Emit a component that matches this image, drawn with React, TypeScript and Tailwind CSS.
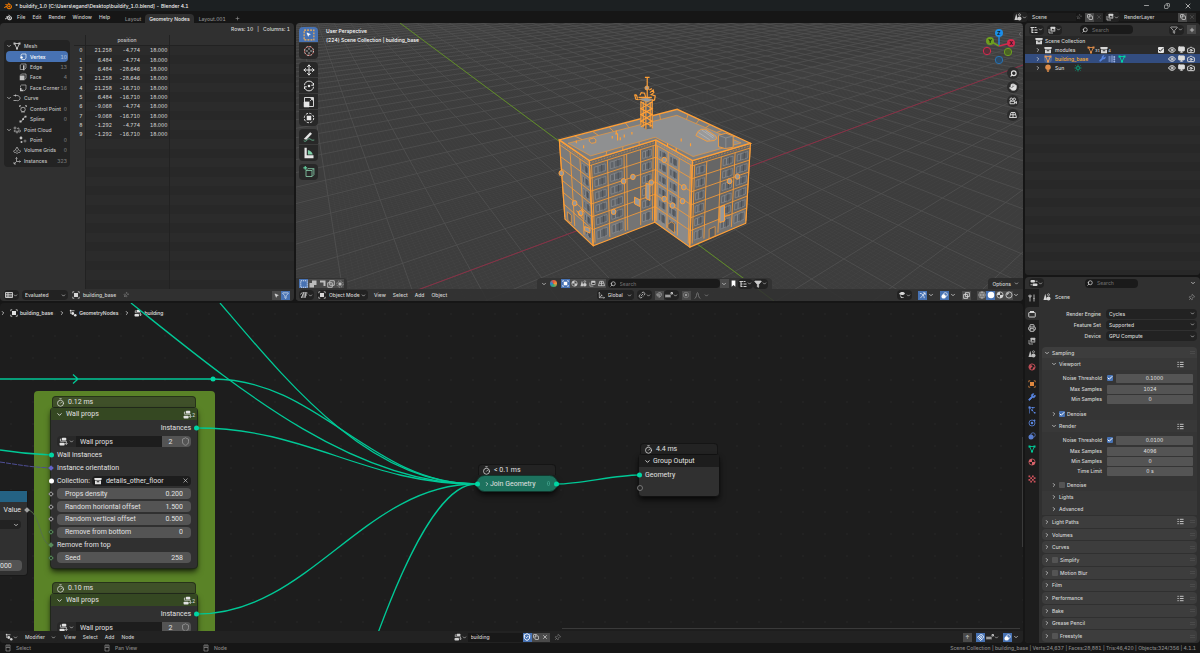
import type { ReactNode } from "react";
import {
  Camera, Check, ChevronDown, ChevronRight, ChevronLeft, Copy, Eye, Filter, Hand, Link2, Magnet, Minus,
  Monitor, MousePointer2, Move, Pin, Plus, Printer, Search, Shield, ShieldCheck, Timer, Wrench, X,
} from "lucide-react";
import { SiBlender } from "react-icons/si";

type P = [number, number];

/* ---------- icons ---------- */

const paths: Record<string, ReactNode> = {
  object: (
    <>
      <rect x="4" y="4" width="8" height="8" fill="currentColor" />
      <path d="M1.500 4.500v-3h3M11.500 1.500h3v3M14.500 11.500v3h-3M4.500 14.500h-3v-3" fill="none" stroke="currentColor" strokeWidth="1.400" />
    </>
  ),
  tree: (
    <>
      <rect x="5" y="1.500" width="8" height="4.500" rx="1.500" fill="currentColor" />
      <rect x="1" y="10" width="9" height="5" rx="1.500" fill="currentColor" />
      <path d="M4 3.500H2.500v4H13v5M11 11l2 2.500 2-2.500" fill="none" stroke="currentColor" strokeWidth="1.300" />
    </>
  ),
  nodes: (
    <>
      <circle cx="3.500" cy="3.500" r="2" fill="currentColor" />
      <circle cx="7.500" cy="9" r="2.800" fill="currentColor" />
      <circle cx="12.500" cy="12.500" r="2.500" fill="currentColor" />
      <path d="M6 3.500h5M3.500 6v4" stroke="currentColor" strokeWidth="1.500" />
    </>
  ),
  geonodes: (
    <g fill="currentColor">
      <path d="M1 3h4v2H1zM1 7h4v2H1zM1 11h4v2H1zM7 1h2v14H7z" />
      <circle cx="12.500" cy="4" r="2" /><circle cx="12.500" cy="8.500" r="2" /><circle cx="12.500" cy="13" r="2" />
    </g>
  ),
  collection: (
    <>
      <rect x="1" y="2" width="14" height="4" rx="0.500" fill="currentColor" />
      <path fillRule="evenodd" d="M2 7h12v7.500H2zM5.500 8.500v2h5v-2z" fill="currentColor" />
    </>
  ),
  mesh: (
    <>
      <path d="M3 3h10l-5 10.500z" fill="none" stroke="currentColor" strokeWidth="1.800" />
      <path d="M1 1h4v4H1zM11 1h4v4h-4zM6 11h4v4H6z" fill="currentColor" />
    </>
  ),
  vertex: (
    <>
      <path d="M4 7V3.500L6 2h8v8l-2 3H5" fill="none" stroke="currentColor" strokeWidth="1.300" />
      <circle cx="5" cy="9" r="2.500" fill="currentColor" />
    </>
  ),
  edge: (
    <>
      <path d="M8 13H2.500V4L5 2h9v8l-3 3" fill="none" stroke="currentColor" strokeWidth="1.300" />
      <path d="M9.500 4.500v10" stroke="currentColor" strokeWidth="3" />
    </>
  ),
  face: (
    <>
      <path d="M3 4l2-2h9v8l-2 3" fill="none" stroke="currentColor" strokeWidth="1.300" />
      <rect x="1.500" y="5" width="9.500" height="9.500" fill="currentColor" />
    </>
  ),
  corner: (
    <>
      <path d="M3 7V3.500L5 2h9v8l-2.500 3H10" fill="none" stroke="currentColor" strokeWidth="1.300" />
      <path d="M2 8h3v3.500h4v3H2z" fill="currentColor" />
    </>
  ),
  curve: <path d="M1 3h5M3.500 3C10 2 15 5 14 9.500 13 13 9 14 7 13M1 13h6M5 1v4" fill="none" stroke="currentColor" strokeWidth="1.500" />,
  control: (
    <>
      <circle cx="8" cy="9" r="4.500" fill="none" stroke="currentColor" strokeWidth="1.500" />
      <path d="M1 2l3 3M15 2l-3 3M1 4V1h3M12 1h3v3M4 14h8" fill="none" stroke="currentColor" strokeWidth="1.300" />
    </>
  ),
  spline: (
    <>
      <path d="M3 13c4 0 3-4 5-5s2-5 6-5" fill="none" stroke="currentColor" strokeWidth="1.500" />
      <path d="M1 11h4v4H1zM6.500 6.500h3.500V10H6.500zM11 1.500h4v3.500h-4z" fill="currentColor" />
    </>
  ),
  points: (
    <g fill="none" stroke="currentColor" strokeWidth="1.300">
      <circle cx="4" cy="4" r="2" /><circle cx="10.500" cy="5" r="1.300" /><circle cx="3.500" cy="10" r="1.300" />
      <circle cx="8" cy="12" r="2" /><circle cx="13" cy="10" r="2" />
    </g>
  ),
  point: (
    <>
      <circle cx="4" cy="4" r="2.800" fill="currentColor" />
      <circle cx="5" cy="12" r="2" fill="currentColor" /><circle cx="12" cy="10" r="2" fill="none" stroke="currentColor" />
    </>
  ),
  volume: <path d="M4 9l4-7 4 7M3 8c-3 3-1 6 2 5 2 2 5 2 6 0 4 1 5-3 2-5M6 10h4" fill="none" stroke="currentColor" strokeWidth="1.400" />,
  axes: <path d="M7 1v8h8M7 9l-5 5M5 3l2-2 2 2M13 7l2 2-2 2M2 10v4h4" fill="none" stroke="currentColor" strokeWidth="1.400" />,
  orientation: <path d="M3 1v12h12M3 13l6-6M1 3l2-2 2 2M13 11l2 2-2 2M6 7h3v3" fill="none" stroke="currentColor" strokeWidth="1.400" />,
  increment: <path d="M1 10h9M2 7v6M6 7v6M10 7v6M12 3h3v3h-3z" fill="none" stroke="currentColor" strokeWidth="1.800" />,
  sheet: <path d="M1 3h14v10H1zM1 6.500h14M1 10h14M6 3v10" fill="none" stroke="currentColor" strokeWidth="1.800" />,
  viewport: <path d="M5 4h10M4 8h10M2 12h10M8 2L3 14M12 2l-2 11M1 7l3-4" fill="none" stroke="currentColor" strokeWidth="1.600" />,
  outline: <path d="M1 3h7M4 3v10h3M4 8h3M9 8h6M9 13h6M9 3h4" fill="none" stroke="currentColor" strokeWidth="2.200" />,
  props: (
    <>
      <rect x="1" y="2" width="9" height="5" rx="2" fill="currentColor" /><rect x="5" y="9" width="10" height="5" rx="2" fill="currentColor" />
      <path d="M11 4.500h4M1 11.500h3" stroke="currentColor" strokeWidth="1.500" />
    </>
  ),
  scene: (
    <>
      <path d="M4.500 1.500L8 14H1z" fill="currentColor" />
      <circle cx="11" cy="11" r="4" fill="currentColor" /><circle cx="11" cy="3.500" r="2" fill="none" stroke="currentColor" strokeWidth="1.400" />
    </>
  ),
  particles: (
    <>
      <path d="M3 1v14M3 3l10 11M3 3h11" stroke="currentColor" strokeWidth="1.200" fill="none" />
      <path d="M1 1h4v4H1zM8 2h3v3H8zM12 12h3v3h-3zM7 7h3v3H7z" fill="currentColor" />
    </>
  ),
  physics: (
    <>
      <circle cx="8" cy="8" r="6" fill="none" stroke="currentColor" strokeWidth="1.600" />
      <circle cx="8" cy="8" r="2.500" fill="currentColor" /><circle cx="13" cy="3" r="1.800" fill="currentColor" />
    </>
  ),
  target: (
    <>
      <circle cx="8" cy="8" r="5.500" fill="none" stroke="currentColor" strokeWidth="1" /><circle cx="8" cy="8" r="2.500" fill="currentColor" />
    </>
  ),
  sphere: (
    <>
      <circle cx="8" cy="8" r="6.200" fill="none" stroke="currentColor" strokeWidth="1.500" />
      <path d="M8 1.800A6.200 6.200 0 0 0 2 8h6zM8 8v6.200A6.200 6.200 0 0 0 14.200 8z" fill="currentColor" />
    </>
  ),
  shiny: (
    <>
      <circle cx="8" cy="8" r="6.200" fill="none" stroke="currentColor" strokeWidth="1.600" />
      <path d="M4 8a4 4 0 0 1 4-4" fill="none" stroke="currentColor" strokeWidth="2" />
    </>
  ),
  wire: <path d="M8 1.500a6.500 6.500 0 1 0 0 13 6.500 6.500 0 0 0 0-13zM1.500 8h13M8 1.500v13M8 1.500c-4 3-4 10 0 13M8 1.500c4 3 4 10 0 13" fill="none" stroke="currentColor" strokeWidth="1" />,
  world: (
    <>
      <circle cx="8" cy="8" r="6.200" fill="none" stroke="currentColor" strokeWidth="1.800" />
      <path d="M3 4l5 1 1 3-3 1-1 4-3-4zM10 9l4-1-2 5-3 1z" fill="currentColor" />
    </>
  ),
  solid: <circle cx="8" cy="8" r="6.500" fill="currentColor" />,
  render: (
    <>
      <rect x="1.500" y="5" width="13" height="9" rx="1" fill="none" stroke="currentColor" strokeWidth="1.800" />
      <path d="M4 2h8v3H4z" fill="currentColor" />
    </>
  ),
  checker: <path d="M1 1h3.500v3.500H1zM8 1h3.500v3.500H8zM4.500 4.500H8V8H4.500zM11.500 4.500H15V8h-3.500zM1 8h3.500v3.500H1zM8 8h3.500v3.500H8zM4.500 11.500H8V15H4.500zM11.500 11.500H15V15h-3.500z" fill="currentColor" />,
  list: <path d="M1 3h3M6.500 3H15M1 8h3M6.500 8H15M1 13h3M6.500 13H15" stroke="currentColor" strokeWidth="2" />,
  bulb: (
    <>
      <circle cx="8" cy="6.500" r="5.500" fill="currentColor" /><path d="M5.500 13h5M6 15h4" stroke="currentColor" strokeWidth="1.500" />
    </>
  ),
  sun: (
    <>
      <circle cx="8" cy="8" r="3" fill="none" stroke="currentColor" strokeWidth="1.500" />
      <path d="M8 1v3M8 12v3M1 8h3M12 8h3M3 3l2 2M11 11l2 2M13 3l-2 2M5 11l-2 2" stroke="currentColor" strokeWidth="1.400" />
    </>
  ),
  layers: (
    <>
      <path d="M2 6v8h8" fill="none" stroke="currentColor" strokeWidth="1.500" />
      <rect x="5" y="1.500" width="9.500" height="9.500" rx="1" fill="currentColor" />
      <path d="M6.500 9l2.500-4 1.500 2 1.500-1.500 1.500 3.500z" fill="#2b2b2b" />
    </>
  ),
  overlay: (
    <>
      <circle cx="6" cy="10" r="5" fill="currentColor" /><circle cx="10" cy="6" r="4.500" fill="none" stroke="currentColor" strokeWidth="1.500" />
    </>
  ),
  gizmo: <path d="M2 3c5 0 10 5 10 11M3 14L14 2M9 2h5v5" fill="none" stroke="currentColor" strokeWidth="1.600" />,
  tool: <path d="M4 1v6M2 2v4h4V2M4 7v8M12 1v7M12 9v6M10.500 9h3" fill="none" stroke="currentColor" strokeWidth="1.800" />,
  visibility: (
    <>
      <path d="M2 6c3-5 9-5 12-1-3 4-8 4-12 1z" fill="currentColor" />
      <path d="M5 9l2 5 2-2 2 2" fill="none" stroke="currentColor" strokeWidth="1.800" />
    </>
  ),
  cursor: (
    <>
      <circle cx="8" cy="8" r="6" fill="none" stroke="#e6e6e6" strokeWidth="1.300" strokeDasharray="2.400 2.300" />
      <circle cx="8" cy="8" r="6" fill="none" stroke="#d9574f" strokeWidth="1.300" strokeDasharray="2.300 2.400" strokeDashoffset="2.300" />
      <path d="M8 3.500v3M8 9.500v3M3.500 8h3M9.500 8h3" stroke="currentColor" />
    </>
  ),
  rotate: (
    <>
      <path d="M2 7a6 5.500 0 0 1 12 0M14 9a6 5.500 0 0 1-12 0M14 4v3h-3M2 12V9h3" fill="none" stroke="currentColor" strokeWidth="1.300" />
      <circle cx="8" cy="8" r="1.700" fill="currentColor" />
    </>
  ),
  scale: (
    <>
      <path d="M2 2h12v12H2z" fill="none" stroke="currentColor" strokeWidth="1.200" />
      <path d="M1.500 8H8v6.500H1.500zM9 7l4-4M10 3h3v3" fill="currentColor" stroke="currentColor" />
    </>
  ),
  transform: (
    <>
      <circle cx="8" cy="8" r="6.300" fill="none" stroke="currentColor" strokeWidth="1.300" strokeDasharray="3 1.900" />
      <rect x="5" y="5" width="6" height="6" fill="currentColor" />
    </>
  ),
  annotate: (
    <>
      <path d="M1 10.500L9.500 1.500l2.500 2L4.500 11.500z" fill="currentColor" />
      <path d="M1 13c4 3 5-5 9-2 2 1.500 3 1.500 5 1" fill="none" stroke="#65b08c" strokeWidth="1.300" />
    </>
  ),
  measure: (
    <>
      <path d="M2 1h3v10h9v4H2z" fill="currentColor" /><path d="M6.500 4c4 1 5.500 3 6.500 6H6.500z" fill="#7fd0a8" />
    </>
  ),
  cube: (
    <>
      <path d="M4 6h8v8H4zM4 6l2.500-2.500h8L12 6M14.500 3.500v8L12 14" fill="none" stroke="#7fbf9f" strokeWidth="1.200" />
      <path d="M3 0v5M.5 2.500h5" stroke="#65d0a0" strokeWidth="1.500" />
    </>
  ),
  mouse: <path d="M4 2h8v12H4zM4 7h8M8 2v5" fill="none" stroke="currentColor" strokeWidth="1.500" />,
  persp: <path d="M4 3h8l3 10H1zM3 7.500h10M8 3v10" fill="none" stroke="currentColor" strokeWidth="1.800" />,
  movie: (
    <>
      <circle cx="4.500" cy="4.500" r="2.500" fill="none" stroke="currentColor" strokeWidth="1.800" /><circle cx="10.500" cy="4.500" r="2.500" fill="none" stroke="currentColor" strokeWidth="1.800" />
      <path d="M2 8.500h9v5H2zM12 11l3-2v4z" fill="none" stroke="currentColor" strokeWidth="1.800" />
    </>
  ),
  union: (
    <>
      <rect x="1" y="6" width="9" height="9" fill="currentColor" /><rect x="6" y="1" width="9" height="9" fill="currentColor" />
    </>
  ),
  subtract: <path d="M4 1h11v11h-4V5H4z" fill="currentColor" />,
  differ: <path d="M1.500 5.500h9v9h-9zM5.500 1.500h9v9h-9z" fill="none" stroke="currentColor" strokeWidth="2" />,
  select: <rect x="1.500" y="1.500" width="13" height="13" fill="none" stroke="currentColor" strokeWidth="1.500" strokeDasharray="2.500 1.500" />,
};

const Icon = ({ name, className = "size-2" }: { name: string; className?: string }) => (
  <svg viewBox="0 0 16 16" aria-hidden="true" className={`shrink-0 ${className}`}>
    {paths[name]}
  </svg>
);

const Down = ({ className = "size-[6px]" }: { className?: string }) => <ChevronDown strokeWidth={3} className={`shrink-0 ${className}`} />;
const Right = () => <ChevronRight strokeWidth={3} className="size-[6px] shrink-0" />;

/* ---------- shared controls ---------- */

const Menu = ({ items }: { items: string[] }) => (
  <nav className="flex items-center">
    {items.map((item) => (
      <button key={item} className="px-[3px] pr-1">{item}</button>
    ))}
  </nav>
);

const IconSelect = ({ children, label }: { children: ReactNode; label: string }) => (
  <button aria-label={label} className="flex h-[10px] shrink-0 items-center rounded-sm bg-[#222222] px-px">
    {children}
    <Down className="size-[5px]" />
  </button>
);

interface IconButtonProps {
  label: string;
  children: ReactNode;
  tone?: "on" | "off" | "dim";
}

const tones = {
  on: "bg-[#4772b3] text-white",
  off: "bg-[#4a4a4a]",
  dim: "bg-[#2a2a2a] text-[#666666]",
};

const IconButton = ({ label, children, tone = "off" }: IconButtonProps) => (
  <button aria-label={label} className={`flex size-[9px] shrink-0 items-center justify-center ${tones[tone]}`}>{children}</button>
);

const Select = ({ label, value, id, className = "" }: { label: string; value: string; id: string; className?: string }) => (
  <div className={`relative flex h-[10px] items-center rounded-sm bg-[#222222] ${className}`}>
    <select id={id} aria-label={label} className="w-full appearance-none bg-transparent pl-[3px] outline-none">
      <option>{value}</option>
    </select>
    <ChevronDown strokeWidth={3} className="pointer-events-none absolute right-[2px] size-[5px]" />
  </div>
);

const SearchBox = ({ className = "" }: { className?: string }) => (
  <label className={`flex h-[9px] items-center gap-1 rounded-sm bg-[#1a1a1a] px-[2px] ${className}`}>
    <Search strokeWidth={3} className="size-[6px] shrink-0 -scale-x-100" />
    <input type="search" aria-label="Search" placeholder="Search" className="w-full min-w-0 bg-transparent outline-none placeholder:text-[#6a6a6a]" />
  </label>
);

const CheckBox = ({ checked, id, label }: { checked?: boolean; id: string; label?: string }) => (
  <span className="relative flex size-[6px] shrink-0">
    <input id={id} aria-label={label} type="checkbox" defaultChecked={checked} className="peer size-[6px] appearance-none rounded-[1px] bg-[#545454] checked:bg-[#4772b3]" />
    <Check className="pointer-events-none absolute inset-0 hidden size-[6px] text-white peer-checked:block" strokeWidth={4} />
  </span>
);

/* ---------- top bars ---------- */

const TitleBar = () => (
  <header className="flex h-[11px] shrink-0 items-center bg-[#1c2022] px-1 text-[#f0f0f0]">
    <SiBlender className="mr-[3px] size-[8px] text-[#ea7600]" />
    <h1>* buildify_1.0 [C:\Users\egand\Desktop\buildify_1.0.blend] - Blender 4.1</h1>
    <div className="ml-auto flex items-center gap-[14px] pr-1">
      <button aria-label="Minimize"><Minus className="size-[7px]" /></button>
      <button aria-label="Restore"><Copy className="size-[6px] -scale-x-100" /></button>
      <button aria-label="Close"><X className="size-[8px]" /></button>
    </div>
  </header>
);

const MenuBar = () => (
  <div className="flex h-[12px] shrink-0 items-center pl-[5px] pr-1 text-[#d0d0d0]">
    <SiBlender className="size-[7px]" />
    <div className="flex items-center gap-[5px] pl-1">
      {["File", "Edit", "Render", "Window", "Help"].map((m) => (
        <button key={m} className="px-px">{m}</button>
      ))}
    </div>
    <div role="tablist" className="ml-[10px] flex h-[9px] items-end self-end text-[#8e8e8e]">
      <button role="tab" className="h-[9px] px-1">Layout</button>
      <button role="tab" aria-selected="true" className="h-[9px] rounded-t-sm bg-[#303030] px-1 text-[#ececec]">Geometry Nodes</button>
      <button role="tab" className="h-[9px] px-[5px]">Layout.001</button>
      <button aria-label="Add workspace" className="flex h-[9px] items-center px-1"><Plus className="size-[5px]" strokeWidth={3} /></button>
    </div>
    <div className="ml-auto flex items-center gap-[2px]">
      <div className="flex h-[9px] items-center">
        <IconSelect label="Browse scene"><Icon name="scene" /></IconSelect>
        <input aria-label="Scene name" defaultValue="Scene" className="w-[48px] bg-[#1d1d1d] pl-[4px] outline-none" />
        <Pin className="mr-[3px] size-[6px] rotate-45 text-[#777777]" />
        <IconButton label="New scene"><Copy className="size-[6px]" strokeWidth={3} /></IconButton>
        <IconButton label="Delete scene" tone="dim"><X className="size-[6px]" /></IconButton>
      </div>
      <div className="flex h-[9px] items-center">
        <IconSelect label="Browse view layer"><Icon name="layers" /></IconSelect>
        <input aria-label="View layer name" defaultValue="RenderLayer" className="w-[58px] bg-[#1d1d1d] pl-[4px] outline-none" />
        <IconButton label="New view layer"><Copy className="size-[6px]" strokeWidth={3} /></IconButton>
        <IconButton label="Delete view layer" tone="dim"><X className="size-[6px]" /></IconButton>
      </div>
    </div>
  </div>
);

/* ---------- spreadsheet ---------- */

const tree = [
  { icon: "mesh", name: "Mesh", group: true },
  { icon: "vertex", name: "Vertex", count: 10, child: true, active: true },
  { icon: "edge", name: "Edge", count: 13, child: true },
  { icon: "face", name: "Face", count: 4, child: true },
  { icon: "corner", name: "Face Corner", count: 16, child: true },
  { icon: "curve", name: "Curve", group: true },
  { icon: "control", name: "Control Point", count: 0, child: true },
  { icon: "spline", name: "Spline", count: 0, child: true },
  { icon: "points", name: "Point Cloud", group: true },
  { icon: "point", name: "Point", count: 0, child: true },
  { icon: "volume", name: "Volume Grids", count: 0 },
  { icon: "axes", name: "Instances", count: 323 },
];

const positions = [
  ["21.258", "-4.774", "18.000"],
  ["6.484", "-4.774", "18.000"],
  ["6.484", "-28.646", "18.000"],
  ["21.258", "-28.646", "18.000"],
  ["21.258", "-16.710", "18.000"],
  ["6.484", "-16.710", "18.000"],
  ["-9.068", "-4.774", "18.000"],
  ["-9.068", "-16.710", "18.000"],
  ["-1.292", "-4.774", "18.000"],
  ["-1.292", "-16.710", "18.000"],
];

const Spreadsheet = () => (
  <section className="flex w-[294px] shrink-0 flex-col overflow-hidden rounded bg-[#303030]">
    <div className="flex h-[12px] shrink-0 items-center justify-end gap-[4px] pr-1">
      <span>Rows: 10</span><span>|</span><span>Columns: 1</span>
    </div>
    <div className="flex min-h-0 flex-1">
      <div className="w-[74px] shrink-0 pl-1 pt-[5px]">
        <ul className="flex h-[127px] w-[66px] flex-col rounded-sm bg-[#232323] px-[2px] py-px text-[#c4c4c4]">
          {tree.map((t) => (
            <li key={t.name} className={`flex min-h-0 flex-1 items-center rounded-sm pr-px ${t.active ? "bg-[#4772b3] text-white" : ""}`}>
              <span className="w-[7px] shrink-0">{t.group && <Down />}</span>
              <span className={`flex shrink-0 ${t.child ? "w-[17px] justify-end pr-[3px]" : "w-[11px]"}`}>
                <Icon name={t.icon} />
              </span>
              <span className="min-w-0 flex-1 whitespace-nowrap">{t.name}</span>
              <span className="opacity-50">{t.count}</span>
            </li>
          ))}
        </ul>
      </div>
      <table className="h-full flex-1 table-fixed border-collapse text-right text-[#c8c8c8]">
        <colgroup>
          <col className="w-[11px]" />
          <col className="w-[28px]" />
          <col className="w-[28px]" />
          <col className="w-[28px]" />
          <col />
        </colgroup>
        <thead>
          <tr className="h-[10px] border-b border-[#222222]">
            <th className="p-0" />
            <th colSpan={3} className="border-x border-[#222222] p-0 text-center font-medium">position</th>
            <th className="p-0" />
          </tr>
        </thead>
        <tbody>
          {Array.from({ length: 26 }, (_, i) => (
            <tr key={i} className="leading-[8px] odd:bg-[#2b2b2b] even:bg-[#282828]">
              <td className="border-r border-[#222222] bg-[#303030] p-0 pr-[2px]">{i < 10 ? i : "\u00a0"}</td>
              <td className="p-0 pr-px">{positions[i]?.[0]}</td>
              <td className="p-0 pr-px">{positions[i]?.[1]}</td>
              <td className="border-r border-[#222222] p-0 pr-px">{positions[i]?.[2]}</td>
              <td className="p-0" />
            </tr>
          ))}
        </tbody>
      </table>
    </div>
    <div className="flex h-[12px] shrink-0 items-center gap-[3px] px-1">
      <IconSelect label="Editor type"><Icon name="sheet" /></IconSelect>
      <Select id="eval" label="Object evaluation state" value="Evaluated" className="w-[46px]" />
      <span className="flex items-center gap-[3px] pl-px"><Icon name="object" />building_base</span>
      <Pin className="ml-[4px] size-[6px] rotate-45 text-[#999999]" />
      <div className="ml-auto flex">
        <IconButton label="Selected only"><MousePointer2 className="size-[5px] fill-current" /></IconButton>
        <IconButton label="Use filter" tone="on"><Filter className="size-[7px]" /></IconButton>
      </div>
    </div>
  </section>
);

/* ---------- 3D viewport ---------- */

const mix = (a: P, b: P, t: number): P => [a[0] + (b[0] - a[0]) * t, a[1] + (b[1] - a[1]) * t];
const pts = (list: P[]) => list.map((p) => p.map((n) => n.toFixed(1)).join(",")).join(" ");

// corners go top-left, top-right, bottom-right, bottom-left
const at = (q: P[], u: number, v: number) => mix(mix(q[0], q[1], u), mix(q[3], q[2], u), v);

const floors = [0.06, 0.21, 0.36, 0.51, 0.66, 0.81];

interface WallProps {
  quad: P[];
  cols: number[];
  fill: string;
  base: string;
  windows: number[];
}

const Wall = ({ quad, cols, fill, base, windows }: WallProps) => (
  <g>
    <polygon points={pts(quad)} fill={fill} />
    <polygon points={pts([at(quad, 0, 0.81), at(quad, 1, 0.81), quad[2], quad[3]])} fill={base} />
    {windows.map((c) =>
      floors.map((f, r) => {
        const w = cols[c + 1] - cols[c];
        const l = cols[c] + w * 0.16;
        const r2 = cols[c + 1] - w * 0.14;
        const third = (r2 - l) / 3;
        const top = f + 0.035;
        const bot = f + (r === 5 ? 0.13 : 0.115);
        return (
          <g key={`${c}-${r}`}>
            <polygon points={pts([at(quad, l, top), at(quad, r2, top), at(quad, r2, bot), at(quad, l, bot)])} fill="#5f6368" stroke="#8b8e92" strokeWidth="2" />
            <polyline points={pts([at(quad, l + third, top), at(quad, l + third, bot)])} stroke="#85888c" strokeWidth="3" />
            <polyline points={pts([at(quad, r2 - third, top), at(quad, r2 - third, bot)])} stroke="#4c5056" strokeWidth="3" />
          </g>
        );
      }),
    )}
    <g stroke="#f39a38" strokeWidth="2.600" fill="none">
      {floors.map((f) => <polyline key={f} points={pts([at(quad, 0, f), at(quad, 1, f)])} />)}
      {cols.map((c) => <polyline key={c} points={pts([at(quad, c, 0.06), at(quad, c, 0.97)])} />)}
      <polyline points={pts([at(quad, 0, 0.03), at(quad, 1, 0.03)])} strokeWidth="1.500" strokeDasharray="5 4" />
    </g>
    <polygon points={pts(quad)} fill="none" stroke="#ff9f36" strokeWidth="3.500" strokeLinejoin="round" />
  </g>
);

const roof: P[] = [[58, 240], [412, 148], [632, 250], [458, 302], [348, 240], [148, 302]];
const roofInner: P[] = [[84, 250], [411, 166], [604, 249], [460, 290], [346, 232], [152, 288]];

const Building = () => (
  <g transform="translate(540 60) scale(0.333)">
    <Wall quad={[[58, 240], [148, 302], [160, 558], [75, 478]]} cols={[0, 0.35, 0.68, 1]} fill="#7b7b7b" base="#7e7e7e" windows={[2]} />
    <Wall quad={[[148, 302], [348, 240], [345, 487], [160, 558]]} cols={[0, 0.03, 0.27, 0.52, 0.56, 0.77, 0.96, 1]} fill="#6b6b6b" base="#747474" windows={[1, 2, 5]} />
    <Wall quad={[[348, 240], [458, 302], [450, 562], [345, 487]]} cols={[0, 0.05, 0.34, 0.64, 0.95, 1]} fill="#878787" base="#8a8a8a" windows={[1, 2]} />
    <Wall quad={[[458, 302], [632, 250], [618, 490], [450, 562]]} cols={[0, 0.04, 0.25, 0.5, 0.74, 1]} fill="#666666" base="#727272" windows={[1, 3, 4]} />
    <polygon points={pts(roof)} fill="#7c7e80" stroke="#ff9f36" strokeWidth="4" />
    <polygon points={pts(roofInner)} fill="#8f9091" stroke="#f39a38" strokeWidth="2" />
    <g stroke="#f39a38" strokeWidth="2.500">
      {[0.13, 0.28, 0.42, 0.56, 0.7, 0.85].map((t) => (
        <polyline key={t} points={pts([mix(roof[0], roof[1], t), mix(roofInner[0], roofInner[1], t)])} />
      ))}
      {[0.15, 0.3, 0.45, 0.62, 0.8].map((t) => (
        <polyline key={t} points={pts([mix(roof[1], roof[2], t), mix(roofInner[1], roofInner[2], t)])} />
      ))}
      {[0.25, 0.5, 0.75].map((t) => (
        <polyline key={t} points={pts([mix(roof[5], roof[4], t), mix(roofInner[5], roofInner[4], t)])} />
      ))}
    </g>
    {/* roof details */}
    <g fill="none" stroke="#ff9f36" strokeWidth="2.500" strokeLinejoin="round">
      <path d="M468 227l6-12 10-7h14l30 20 3 8-8 6-22 2z" fill="#999999" />
      <path d="M476 218l34 22M486 210l34 24M497 212l26 18" stroke="#bdbdbd" strokeWidth="2" />
      <path d="M536 226l22-6 22 8v34l-24 4-20-6z" fill="#6f7276" />
      <path d="M558 234v32M536 226l22 8 22-6" stroke="#9a9a9a" strokeWidth="2" />
      <path d="M148 238l14-4 6 6-1 8-12 2-7-6z" fill="#858585" />
      <path d="M109 242v8M131 256v9M217 228v8M229 212v8M226 222h7v20M241 232v9M253 224v9M276 216v8M383 250v10M409 264v10M424 236v9M452 250v9" strokeWidth="3.500" />
    </g>
    {/* lattice tower */}
    <path d="M302 124h36v82l-20 2-16-12z" fill="#5e646b" />
    <g fill="none" stroke="#ff9f36" strokeWidth="3.500">
      <path d="M303 124v72M310 126v76M318 124v84M331 126v76M337 122v84" />
      <path d="M303 126l34 20-34 18 34 20-34 16M337 126l-34 20 34 18-34 20 34 14" />
      <path d="M284 104l4 14 8 1M284 104l6 2 3 10M296 112h40M300 106l4-8 10 2 4 14M322 50v72M315 52h14M330 98l10-8 2 8-8 6 12 4-2 12-8 2M328 90l8-4" />
    </g>
    <circle cx="321" cy="84" r="6" fill="#b0a090" stroke="#ff9f36" strokeWidth="2.500" />
    <path d="M296 118l24-5 20 6-18 7z" fill="#8f99a3" stroke="#ff9f36" strokeWidth="1.500" />
    {/* air conditioners and balconies */}
    <g fill="#94989c" stroke="#ff9f36" strokeWidth="3">
      {[[64, 340], [104, 430], [251, 364], [279, 351], [334, 368], [221, 456], [373, 300], [398, 437], [432, 382], [373, 417], [428, 424], [569, 364], [593, 350], [122, 460]].map(([x, y]) => (
        <ellipse key={`${x}-${y}`} cx={x} cy={y} rx="7" ry="8" />
      ))}
      <path d="M318 370l12 4v48l-12-6zM284 412l16 8v20l-16-8zM540 442l14-6v48l-14 4zM134 500l16 6v14l-16-8z" />
      <path d="M110 452l18 24M122 446l12 12M556 466h14" />
    </g>
    <g fill="#5a5d61" stroke="#ff9f36" strokeWidth="2">
      <path d="M384 494l10-8 10 6v28l-20-16zM508 508l18-8v28l-18 8zM82 456l12 10v24l-10-8z" />
    </g>
  </g>
);

const range = (from: number, to: number) => Array.from({ length: to - from + 1 }, (_, i) => from + i);

const Grid = () => (
  <g fill="none">
    <g stroke="#ffffff" strokeOpacity="0.018" strokeWidth="1">
      {range(-60, 50).map((k) => <path key={`a${k}`} d={`M288 -60L${774 + k * 7.16} 301`} />)}
      {range(-60, 90).map((k) => <path key={`b${k}`} d={`M1359 -60L${388 + k * 9.7} 301`} />)}
    </g>
    <g stroke="#505050" strokeOpacity="0.8" strokeWidth="1">
      {range(-7, 38).map((k) => <path key={`a${k}`} d={`M288 -60L${774 + k * 71.6} 301`} />)}
      {range(-38, 9).map((k) => <path key={`b${k}`} d={`M1359 -60L${388 + k * 97} 301`} />)}
    </g>
    <path d="M400 23L774 301" stroke="#5f8c26" />
    <path d="M388 301L1023 65" stroke="#8a2f45" />
  </g>
);

const toolGroups = [["select", "cursor"], ["move", "rotate", "scale", "transform"], ["annotate", "measure"], ["cube"]];

const Toolbar = () => (
  <div className="flex flex-col gap-[3px]">
    {toolGroups.map((group) => (
      <div key={group[0]} className="flex flex-col divide-y divide-[#3a3a3a] overflow-hidden rounded-sm">
        {group.map((tool) => (
          <button key={tool} aria-label={tool} className={`relative flex h-[16px] w-[19px] items-center justify-center text-[#e6e6e6] ${tool === "select" ? "bg-[#4772b3]" : "bg-[#282828]"}`}>
            {tool === "select" && <Icon name="select" className="size-[12px] text-[#ffb24d]" />}
            {tool === "select" && <MousePointer2 className="absolute size-[5px] fill-white text-white" />}
            {tool === "move" && <Move className="size-[12px]" />}
            {tool !== "select" && tool !== "move" && <Icon name={tool} className="size-[12px]" />}
          </button>
        ))}
      </div>
    ))}
  </div>
);

const Gizmo = () => (
  <svg viewBox="982 27 38 38" className="size-[38px]" aria-label="Orientation gizmo">
    <path d="M1000 46V33" stroke="#2083d8" strokeWidth="1.500" />
    <path d="M1000 46L991 41" stroke="#6e9f1f" strokeWidth="1.500" />
    <path d="M1000 46L1012 43" stroke="#d4294e" strokeWidth="1.500" />
    <circle cx="988" cy="51" r="3.700" fill="#5a2f3a" stroke="#d4294e" />
    <circle cx="1009" cy="52" r="3.700" fill="#4a6325" stroke="#6e9f1f" />
    <circle cx="1000" cy="60" r="3.700" fill="#2b4a66" stroke="#2a72b0" />
    <circle cx="1000" cy="33" r="4" fill="#1c8fe8" />
    <circle cx="991" cy="41" r="4" fill="#6e9f1f" />
    <circle cx="1012" cy="43" r="4" fill="#d4294e" />
    <g fontSize="5" fontWeight="700" textAnchor="middle" fill="#111111">
      <text x="1000" y="35">Z</text>
      <text x="991" y="43">Y</text>
      <text x="1012" y="45">X</text>
    </g>
  </svg>
);

const NavButton = ({ label, children }: { label: string; children: ReactNode }) => (
  <button aria-label={label} className="flex size-[12px] items-center justify-center rounded-full bg-[#2b2b2b] text-[#e0e0e0]">{children}</button>
);

const Viewport = () => (
  <section className="relative flex min-w-0 flex-1 flex-col justify-between overflow-hidden rounded bg-[#3d3d3d]">
    <svg viewBox="296 23 727 278" preserveAspectRatio="xMidYMid slice" className="absolute inset-0 size-full">
      <Grid />
      <Building />
    </svg>
    <ChevronLeft className="absolute right-0 top-[8px] size-[6px] text-[#999999]" />
    <div className="relative flex items-start gap-2 pl-[3px] pt-[4px]">
      <Toolbar />
      <div className="leading-[9px] text-white">
        <p>User Perspective</p>
        <p>(224) Scene Collection | building_base</p>
      </div>
      <div className="ml-auto flex flex-col items-end gap-[2px] pr-[4px]">
        <Gizmo />
        <NavButton label="Zoom"><Search className="size-[7px] -scale-x-100" strokeWidth={4} /></NavButton>
        <NavButton label="Pan"><Hand className="size-[8px] fill-current" /></NavButton>
        <NavButton label="Camera view"><Icon name="movie" /></NavButton>
        <NavButton label="Perspective"><Icon name="persp" /></NavButton>
      </div>
    </div>
    <div className="relative">
      <div className="flex items-end">
        <div className="flex h-[11px] flex-1 items-center">
          <div className="flex h-full items-center rounded-tr bg-[#333333] px-[3px] text-[#bdbdbd]">
            {["select", "union", "subtract", "differ", "transform"].map((m, i) => (
              <IconButton key={m} label={`Select mode ${m}`} tone={i ? "off" : "on"}><Icon name={m} /></IconButton>
            ))}
          </div>
        </div>
        <div className="mr-[11px] flex h-[11px] items-center rounded-t bg-[#333333] px-1 text-[#cccccc]">
          <Down />
          <span className="mx-[3px] size-[7px] rounded-full bg-[conic-gradient(#e2553f,#e8973a,#3aa76d,#2d83c9,#e2553f)]" />
          <div className="ml-px flex">
            {["object", "sphere", "scene", "layers", "persp"].map((m, i) => (
              <IconButton key={m} label={`Filter ${m}`} tone={i ? "off" : "on"}><Icon name={m} className="size-[7px]" /></IconButton>
            ))}
          </div>
          <SearchBox className="ml-[2px] w-[112px]" />
          <IconButton label="Hide"><Down /></IconButton>
          <svg viewBox="0 0 8 10" className="mx-[2px] h-[7px] w-[5px]"><path d="M1 0h6v10L4 7.500 1 10z" fill="white" /></svg>
          <IconSelect label="Display mode"><Icon name="outline" /></IconSelect>
          <IconSelect label="Filter"><Filter className="size-[8px] fill-current" /></IconSelect>
        </div>
        <div className="flex h-[11px] flex-1 items-center justify-end">
          <button className="flex h-full items-center gap-[3px] rounded-tl bg-[#2b2b2b] px-1">Options<Down className="size-[5px]" /></button>
        </div>
      </div>
      <div className="flex h-[12px] items-center justify-between bg-[#303030]/85 px-[3px]">
        <div className="flex flex-1 items-center gap-[3px]">
          <IconSelect label="Editor type"><Icon name="viewport" /></IconSelect>
          <div className="flex h-[10px] items-center rounded-sm bg-[#222222] pl-px">
            <Icon name="object" />
            <Select id="mode" label="Mode" value="Object Mode" className="w-[42px]" />
          </div>
          <Menu items={["View", "Select", "Add", "Object"]} />
        </div>
        <div className="mr-[13px] flex items-center gap-[3px]">
          <div className="flex h-[10px] items-center rounded-sm bg-[#222222] pl-px">
            <Icon name="orientation" className="size-[7px]" />
            <Select id="orientation" label="Transform orientation" value="Global" className="w-[29px]" />
          </div>
          <IconSelect label="Pivot"><Link2 className="size-[8px] -rotate-45" /></IconSelect>
          <div className="flex items-center">
            <IconButton label="Snap"><Magnet className="size-[6px]" /></IconButton>
            <IconSelect label="Snap to"><Icon name="increment" /></IconSelect>
          </div>
          <div className="flex items-center gap-[3px] text-[#999999]">
            <IconButton label="Proportional editing"><Icon name="target" /></IconButton>
            <svg viewBox="0 0 12 12" className="size-[7px]"><path d="M1 11C5 11 4 1 6 1s1 10 5 10" fill="none" stroke="currentColor" /></svg>
            <Down className="size-[5px]" />
          </div>
        </div>
        <div className="flex flex-1 items-center justify-end gap-[6px] pr-px">
          <IconSelect label="Visibility"><Icon name="visibility" /></IconSelect>
          <div className="flex items-center gap-px">
            <IconButton label="Gizmos" tone="on"><Icon name="gizmo" className="size-[7px]" /></IconButton>
            <Down />
          </div>
          <div className="flex items-center gap-px">
            <IconButton label="Overlays" tone="on"><Icon name="overlay" className="size-[7px]" /></IconButton>
            <Down />
          </div>
          <IconButton label="X-ray"><Icon name="differ" className="size-[7px]" /></IconButton>
          <div className="flex items-center">
            {["wire", "solid", "sphere", "shiny"].map((m) => (
              <IconButton key={m} label={`Shading ${m}`} tone={m === "solid" ? "on" : "off"}><Icon name={m} /></IconButton>
            ))}
            <Down />
          </div>
        </div>
      </div>
    </div>
  </section>
);

/* ---------- node editor ---------- */

const sockets: Record<string, string> = {
  geometry: "size-[5px] rounded-full bg-[#00d6a3]",
  vector: "size-[4px] rotate-45 bg-[#6363c7]",
  collection: "size-[5px] rounded-full bg-white",
  float: "size-[4px] rotate-45 bg-[#a1a1a1]",
  int: "size-[4px] rotate-45 bg-[#598c5c]",
  floatField: "size-[4px] rotate-45 border border-[#a1a1a1] bg-[#1d1d1d]",
  intField: "size-[4px] rotate-45 border border-[#598c5c] bg-[#1d2a1d]",
  empty: "size-[6px] rounded-full border border-[#777777] bg-[#262626]",
};

const Socket = ({ type, side = "left" }: { type: string; side?: "left" | "right" }) => (
  <span className={`absolute top-1/2 -translate-y-1/2 ${side === "left" ? "-left-[2px]" : "-right-[2px]"} ${sockets[type]}`} />
);

const Perf = ({ time, className = "" }: { time: string; className?: string }) => (
  <div className={`mx-[2px] flex h-[11px] items-center gap-[3px] rounded-t-sm border border-b-0 px-[3px] ${className}`}>
    <Timer className="size-[9px]" />
    {time}
  </div>
);

const inputs = [
  { label: "Props density", value: "0.200", socket: "floatField" },
  { label: "Random horiontal offset", value: "1.500", socket: "floatField" },
  { label: "Random vertical offset", value: "0.500", socket: "floatField" },
  { label: "Remove from bottom", value: "0", socket: "intField" },
  { label: "Remove from top", socket: "int" },
  { label: "Seed", value: "258", socket: "intField" },
];

const WallPropsInputs = () => (
  <div className="mb-[4px] mt-[2px] flex h-[115px] flex-col">
    <div className="relative flex flex-1 items-center pl-[6px]">Wall instances<Socket type="geometry" /></div>
    <div className="relative flex flex-1 items-center pl-[6px]">Instance orientation<Socket type="vector" /></div>
    <div className="relative flex flex-1 items-center px-[6px]">
      <label htmlFor="collection">Collection:</label>
      <span className="ml-[2px] flex h-[10px] min-w-0 flex-1 items-center gap-[4px] rounded-sm bg-[#1d1d1d] px-[2px]">
        <Icon name="collection" className="size-[8px]" />
        <input id="collection" defaultValue="details_other_floor" className="min-w-0 flex-1 bg-transparent outline-none" />
        <X className="size-[7px] shrink-0" />
      </span>
      <Socket type="collection" />
    </div>
    {inputs.map((f) => (
      <div key={f.label} className="relative flex flex-1 items-center px-[6px]">
        {f.value ? (
          <label className="flex h-[11px] flex-1 items-center rounded-sm bg-[#545454] px-2">
            <span className="flex-1 whitespace-nowrap">{f.label}</span>
            <input defaultValue={f.value} className="w-6 bg-transparent text-right outline-none" />
          </label>
        ) : (
          f.label
        )}
        <Socket type={f.socket} />
      </div>
    ))}
  </div>
);

const WallPropsNode = ({ time, className, children }: { time: string; className: string; children?: ReactNode }) => (
  <article className={`absolute w-[148px] ${className}`}>
    <Perf time={time} className="border-[#27331a] bg-[#3f5029]" />
    <div className="rounded-sm border border-[#20281a] bg-[#303030] shadow-md shadow-black/60">
      <div className="flex h-[12px] items-center gap-[3px] bg-[#354822] pl-[5px] pr-[2px]">
        <Down className="size-[7px]" />
        <h2>Wall props</h2>
        <span className="ml-auto flex items-center">
          <Icon name="tree" className="size-[9px]" />
          <span className="self-end text-[5px]">2</span>
        </span>
      </div>
      <div className="relative flex h-[16px] items-center justify-end pr-[6px]">
        Instances
        <Socket type="geometry" side="right" />
      </div>
      <div className="mx-[6px] flex h-[11px] items-stretch">
        <button aria-label="Browse node groups" className="flex w-[19px] items-center justify-center gap-px rounded-l-sm bg-[#282828]"><Icon name="tree" className="size-[9px]" /><Down className="size-[5px]" /></button>
        <input aria-label="Node group" defaultValue="Wall props" className="min-w-0 flex-1 bg-[#1d1d1d] pl-[4px] outline-none" />
        <button className="w-[17px] bg-[#545454]">2</button>
        <button aria-label="Fake user" className="flex w-[12px] items-center justify-center rounded-r-sm bg-[#545454] text-[#a0a0a0]"><Shield className="size-[9px]" /></button>
      </div>
      {children}
    </div>
  </article>
);

const links = [
  "M213 379C318 379 371 484 476 484",
  "M131 303C230 382 350 484 476 484",
  "M220 303C290 385 370 484 476 484",
  "M197 428C309 428 364 484 476 484",
  "M197 614C309 614 364 484 476 484",
  "M378 633C405 560 440 484 476 484",
  "M557 484C580 484 615 475 639 475",
  "M0 450Q25 454 51 455",
  "M0 379H213M73 374.500l5 4.500-5 4.500",
];

const Crumb = ({ icon, name }: { icon: string; name: string }) => (
  <li className="flex items-center gap-[4px]">
    <Right />
    <span className="flex items-center gap-[2px]"><Icon name={icon} />{name}</span>
  </li>
);

const NodeEditor = () => (
  <section className="flex min-h-0 flex-[340] flex-col overflow-hidden rounded bg-[#1d1d1d]">
    <div className="relative min-h-0 flex-1 overflow-hidden bg-[radial-gradient(#222222_1px,transparent_1px)] bg-[size:22px_22px] font-[Roboto,sans-serif] text-[7px] font-normal text-[#e2e2e2]">
      <ol className="flex gap-[6px] pt-[6px] font-[Inter,sans-serif] text-[5px] font-medium leading-[7px]">
        <Crumb icon="object" name="building_base" />
        <Crumb icon="nodes" name="GeometryNodes" />
        <Crumb icon="tree" name="building" />
      </ol>
      <div className="absolute left-[34px] top-[88px] h-[400px] w-[181px] rounded-sm bg-[#5a8327]" />
      <svg viewBox="0 303 1022 340" className="absolute left-0 top-0 h-[340px] w-[1022px]" fill="none">
        <g stroke="#00c896" strokeWidth="1.300">
          {links.map((d) => <path key={d} d={d} />)}
        </g>
        <path d="M0 462C20 465 30 467 51 468" stroke="#4f4f96" strokeDasharray="5 1" />
        <path d="M28 510C40 512 40 545 51 545" stroke="#56704c" />
        <circle cx="213" cy="379" r="2.500" fill="#00d6a3" />
      </svg>

      <article className="absolute left-0 top-[187px] w-[28px] rounded-r-sm border border-l-0 border-black/50 bg-[#303030]">
        <div className="h-[11px] bg-[#246283]" />
        <div className="relative flex h-[15px] items-center justify-end pr-[6px]">Value<Socket type="float" side="right" /></div>
        <div className="mr-[6px] mt-[3px] flex h-[9px] items-center justify-end rounded-r-sm bg-[#222222] pr-[2px]"><Down /></div>
        <input aria-label="Value" defaultValue="000" className="mb-[4px] mt-[31px] block h-[11px] w-[22px] rounded-r-sm bg-[#545454] outline-none" />
      </article>

      <WallPropsNode time="0.12 ms" className="left-[50px] top-[93px]"><WallPropsInputs /></WallPropsNode>
      <WallPropsNode time="0.10 ms" className="left-[50px] top-[279px]" />

      <article className="absolute left-[476px] top-[161px] w-[82px]">
        <Perf time="< 0.1 ms" className="border-[#151515] bg-[#232323]" />
        <div className="relative flex h-[17px] items-center rounded-full border border-[#12382e] bg-[#1d725e] px-[7px] shadow-md shadow-black/60">
          <Right />
          <h2>Join Geometry</h2>
          <span className="ml-auto h-[5px] w-[3px] rounded-sm border border-[#3c9c86]" />
          <Socket type="geometry" /><Socket type="geometry" side="right" />
        </div>
      </article>

      <article className="absolute left-[638px] top-[140px] w-[82px]">
        <Perf time="4.4 ms" className="border-[#151515] bg-[#232323]" />
        <div className="rounded-sm border border-[#111111] bg-[#303030] pb-[3px] shadow-md shadow-black/60">
          <div className="flex h-[12px] items-center gap-[2px] bg-[#1d1d1d] pl-[5px]">
            <Down className="size-[7px]" /><h2>Group Output</h2>
          </div>
          <div className="relative flex h-[16px] items-center pl-[6px]">Geometry<Socket type="geometry" /></div>
          <div className="relative h-[10px]"><Socket type="empty" /></div>
        </div>
      </article>
      <span className="absolute bottom-[84px] right-0 h-[110px] w-px bg-[#3a3a3a]" />
      <span className="absolute bottom-[2px] right-[3px] h-px w-[458px] bg-[#3a3a3a]" />
    </div>
    <div className="flex h-[12px] shrink-0 items-center bg-[#222222] px-[4px] text-[#d0d0d0]">
      <div className="flex flex-1 items-center gap-[3px]">
        <IconSelect label="Editor type"><Icon name="nodes" /></IconSelect>
        <Select id="type" label="Node tree type" value="Modifier" className="w-[36px]" />
        <Menu items={["View", "Select", "Add", "Node"]} />
      </div>
      <div className="mr-[10px] flex h-[9px] items-center">
        <IconSelect label="Browse node trees"><Icon name="tree" /></IconSelect>
        <input aria-label="Node tree" defaultValue="building" className="h-[9px] w-[55px] bg-[#181818] pl-[3px] outline-none" />
        <IconButton label="Fake user" tone="on"><ShieldCheck className="size-[8px]" strokeWidth={3} /></IconButton>
        <IconButton label="Duplicate"><Copy className="size-[6px]" strokeWidth={3} /></IconButton>
        <IconButton label="Unlink"><X className="size-[6px]" strokeWidth={3} /></IconButton>
        <Pin className="ml-[4px] size-[7px] rotate-45 text-[#888888]" />
      </div>
      <div className="flex flex-1 items-center justify-end gap-[3px]">
        <IconButton label="Parent tree">↑</IconButton>
        <div className="ml-px flex items-center">
          <IconButton label="Snap" tone="on"><Magnet className="size-[7px]" strokeWidth={3} /></IconButton>
          <IconSelect label="Snap to"><Icon name="increment" /></IconSelect>
        </div>
        <div className="flex items-center gap-px">
          <IconButton label="Overlays" tone="on"><Icon name="overlay" className="size-[7px]" /></IconButton>
          <Down />
        </div>
      </div>
    </div>
  </section>
);

/* ---------- outliner ---------- */

const Toggles = () => (
  <span className="ml-auto flex items-center gap-[2px] pr-[5px] text-[#dcdcdc]">
    <Eye className="size-[8px]" strokeWidth={3} />
    <Monitor className="size-[7px] fill-current" strokeWidth={3} />
    <Camera className="size-[8px]" strokeWidth={3} />
  </span>
);

const CheckBoxLight = () => (
  <span className="relative mr-[4px] flex size-[6px]">
    <input type="checkbox" defaultChecked aria-label="Exclude modules from view layer" className="size-[6px] appearance-none rounded-[1px] bg-[#e6e6e6]" />
    <Check className="pointer-events-none absolute inset-0 size-[6px] text-[#222222]" strokeWidth={4} />
  </span>
);

const outlinerRow = "flex h-[9px] shrink-0 items-center";

const Outliner = () => (
  <section className="flex min-h-0 flex-[252] flex-col overflow-hidden rounded bg-[#282828]">
    <div className="flex h-[13px] shrink-0 items-center bg-[#303030] px-[4px]">
      <div className="flex gap-[3px]">
        <IconSelect label="Editor type"><Icon name="outline" /></IconSelect>
        <IconSelect label="Display mode"><Icon name="layers" /></IconSelect>
      </div>
      <SearchBox className="ml-[18px] mr-auto w-[53px]" />
      <div className="flex items-center gap-[3px]">
        <IconSelect label="Filter"><Filter className="size-[8px]" /></IconSelect>
        <IconButton label="New collection"><Plus className="size-[6px]" strokeWidth={3} /></IconButton>
      </div>
    </div>
    <div className="flex min-h-0 flex-1 flex-col overflow-hidden">
      <div className={`${outlinerRow} gap-[2px] pl-[10px]`}><Icon name="collection" />Scene Collection</div>
      <div className={`${outlinerRow} bg-[#2b2b2b] pl-[10px]`}>
        <span className="mr-[3px] flex"><Right /></span>
        <Icon name="collection" />
        <span className="ml-[3px] w-[32px]">modules</span>
        <Icon name="mesh" className="size-[8px] text-[#e08d49]" />
        <span className="self-end text-[4px] leading-[6px]">31</span>
        <Icon name="collection" className="size-[8px]" />
        <span className="self-end text-[4px] leading-[6px]">4</span>
        <span className="ml-auto flex items-center"><CheckBoxLight /><Toggles /></span>
      </div>
      <div className={`${outlinerRow} bg-[#334d80] pl-[10px]`}>
        <span className="mr-[3px] flex"><Right /></span>
        <span className="flex rounded-sm bg-white/15 text-[#e89a55]"><Icon name="mesh" /></span>
        <span className="ml-[3px] w-[44px] text-[#ffaf29]">building_base</span>
        <span className="flex gap-[2px]">
          <Wrench className="size-[7px] fill-current text-[#5a86e0]" />
          <Icon name="geonodes" className="size-[8px] text-[#9db4e6]" />
          <Icon name="mesh" className="size-[8px] text-[#00d6a3]" />
        </span>
        <Toggles />
      </div>
      <div className={`${outlinerRow} bg-[#2b2b2b] pl-[10px]`}>
        <span className="mr-[3px] flex"><Right /></span>
        <Icon name="bulb" className="size-[8px] text-[#e08d49]" />
        <span className="ml-[3px] w-[19px]">Sun</span>
        <Icon name="sun" className="size-[8px] text-[#00b98d]" />
        <Toggles />
      </div>
      {range(0, 24).map((i) => (
        <div key={i} className="h-[9px] shrink-0 odd:bg-[#282828] even:bg-[#2b2b2b]" />
      ))}
    </div>
  </section>
);

/* ---------- properties ---------- */

const tabs = [
  { icon: "tool", color: "text-[#bdbdbd]" },
  { icon: "render", color: "text-[#dddddd]", active: true },
  { icon: "printer", color: "text-[#bdbdbd]" },
  { icon: "layers", color: "text-[#bdbdbd]" },
  { icon: "scene", color: "text-[#bdbdbd]" },
  { icon: "world", color: "text-[#c9505a]" },
  { icon: "object", color: "text-[#e0883f]", gap: true },
  { icon: "wrench", color: "text-[#5a86e0]" },
  { icon: "particles", color: "text-[#5a86e0]" },
  { icon: "physics", color: "text-[#5a86e0]" },
  { icon: "overlay", color: "text-[#5a7fd0]" },
  { icon: "mesh", color: "text-[#00c896]" },
  { icon: "sphere", color: "text-[#d9626a]" },
  { icon: "checker", color: "text-[#c9505a]", gap: true },
];

const Grip = () => <span className="h-[3px] w-[5px] shrink-0 border-y border-[#4a4a4a]" />;

const Field = ({ label, value, check, group }: { label: string; value: string; check?: boolean; group: string }) => {
  const id = `${group}-${label}`;
  return (
    <div className="flex h-full min-h-0 items-center pr-1">
      <label htmlFor={id} className="w-[60px] shrink-0 text-right">{label}</label>
      {check ? <span className="ml-[5px] mr-[3px]"><CheckBox checked id={`${id}-on`} label={`Use ${label}`} /></span> : <span className="w-[5px]" />}
      <input id={id} defaultValue={value} className="h-[9px] min-w-0 flex-1 rounded-[1px] bg-[#545454] text-center outline-none" />
    </div>
  );
};

interface SubProps {
  title: string;
  open?: boolean;
  check?: boolean;
  checked?: boolean;
  list?: boolean;
}

const Sub = ({ title, open, check, checked, list }: SubProps) => (
  <div className={`flex h-[12px] items-center gap-[2px] pl-[9px] pr-[13px] ${open ? "bg-[#383838]" : ""}`}>
    {open ? <Down /> : <Right />}
    {check && <CheckBox checked={checked} id={`sub-${title}-${checked}`} label={title} />}
    <h3>{title}</h3>
    {list && <span className="ml-auto"><Icon name="list" className="size-[7px]" /></span>}
  </div>
);

const panels = [
  { title: "Light Paths", list: true },
  { title: "Volumes" },
  { title: "Curves" },
  { title: "Simplify", check: true },
  { title: "Motion Blur", check: true },
  { title: "Film" },
  { title: "Performance", list: true },
  { title: "Bake" },
  { title: "Grease Pencil" },
  { title: "Freestyle", check: true },
];

const Properties = () => (
  <section className="flex min-h-0 flex-[366] flex-col overflow-hidden rounded bg-[#303030]">
    <div className="flex h-[12px] shrink-0 items-center px-[4px]">
      <IconSelect label="Editor type"><Icon name="props" /></IconSelect>
      <SearchBox className="ml-[41px] mr-auto w-[53px]" />
      <button aria-label="Options"><Down /></button>
    </div>
    <div className="flex min-h-0 flex-1">
      <div role="tablist" className="flex w-[14px] shrink-0 flex-col bg-[#1d1d1d] pt-[2px]">
        {tabs.map((t) => (
          <button
            key={t.icon}
            role="tab"
            aria-label={t.icon}
            aria-selected={t.active}
            className={`flex h-[13px] items-center justify-center rounded-l-sm ${t.color} ${t.gap ? "mt-[4px]" : ""} ${t.active ? "mb-px mt-[3px] bg-[#303030]" : ""}`}
          >
            {t.icon === "wrench" && <Wrench className="size-2 fill-current" />}
            {t.icon === "printer" && <Printer className="size-2" strokeWidth={3} />}
            {t.icon !== "wrench" && t.icon !== "printer" && <Icon name={t.icon} />}
          </button>
        ))}
      </div>
      <div className="min-w-0 flex-1 px-[3px]">
        <div className="flex h-[16px] items-center gap-[4px] pl-px pr-[2px]">
          <Icon name="scene" />Scene
          <Pin className="ml-auto size-[7px] rotate-45 text-[#999999]" />
        </div>
        <div className="flex h-[37px] flex-col pt-[3px]">
          {[["Render Engine", "Cycles"], ["Feature Set", "Supported"], ["Device", "GPU Compute"]].map(([label, value]) => (
            <div key={label} className="flex flex-1 items-center gap-[5px]">
              <label htmlFor={label} className="w-[59px] text-right">{label}</label>
              <Select id={label} label={label} value={value} className="flex-1" />
            </div>
          ))}
        </div>
        <div className="mt-[5px] rounded-sm bg-[#353535]">
          <div className="flex h-[11px] items-center gap-[2px] rounded-t-sm bg-[#3d3d3d] px-[2px]">
            <Down /><h2 className="flex-1">Sampling</h2><Grip />
          </div>
          <Sub title="Viewport" open list />
          <div className="flex h-[38px] flex-col pt-[2px]">
            <div className="h-[12px]"><Field group="viewport" label="Noise Threshold" value="0.1000" check /></div>
            <div className="h-[10px]"><Field group="viewport" label="Max Samples" value="1024" /></div>
            <div className="h-[10px]"><Field group="viewport" label="Min Samples" value="0" /></div>
          </div>
          <Sub title="Denoise" check checked />
          <Sub title="Render" open list />
          <div className="flex h-[47px] flex-col pt-[2px]">
            <div className="h-[12px]"><Field group="render" label="Noise Threshold" value="0.0100" check /></div>
            <div className="h-[10px]"><Field group="render" label="Max Samples" value="4096" /></div>
            <div className="h-[10px]"><Field group="render" label="Min Samples" value="0" /></div>
            <div className="h-[10px]"><Field group="render" label="Time Limit" value="0 s" /></div>
          </div>
          <Sub title="Denoise" check />
          <div className="bg-[#383838]">
            <Sub title="Lights" />
            <Sub title="Advanced" />
          </div>
        </div>
        <div className="flex h-[127px] flex-col">
          {panels.map((p) => (
            <div key={p.title} className="flex-1 pt-px">
              <div className="flex h-full items-center gap-[2px] rounded-sm bg-[#3d3d3d] px-[2px]">
                <Right />
                {p.check && <CheckBox id={p.title} label={p.title} />}
                <h2 className="flex-1">{p.title}</h2>
                {p.list && <Icon name="list" className="mr-[4px] size-[7px]" />}
                <Grip />
              </div>
            </div>
          ))}
        </div>
      </div>
    </div>
  </section>
);

const hints = ["Select", "Pan View", "Node"];

const StatusBar = () => (
  <footer className="flex h-[10px] shrink-0 items-center px-[4px] text-[#8a8a8a]">
    {hints.map((h) => (
      <span key={h} className="flex w-[99px] items-center gap-[4px]"><Icon name="mouse" />{h}</span>
    ))}
    <span className="ml-auto">Scene Collection | building_base | Verts:24,637 | Faces:28,881 | Tris:46,420 | Objects:324/356 | 4.1.1</span>
  </footer>
);

export default function App() {
  return (
    <div className="flex h-screen w-full flex-col overflow-hidden bg-[#161616] font-[Inter,sans-serif] text-[5px] font-medium leading-[8px] tabular-nums text-[#d6d6d6]">
      <TitleBar />
      <MenuBar />
      <main className="flex min-h-0 flex-1 gap-[2px]">
        <div className="flex min-w-0 flex-1 flex-col gap-[2px]">
          <div className="flex min-h-0 flex-[278] gap-[2px]">
            <Spreadsheet />
            <Viewport />
          </div>
          <NodeEditor />
        </div>
        <div className="flex w-[175px] shrink-0 flex-col gap-[2px]">
          <Outliner />
          <Properties />
        </div>
      </main>
      <StatusBar />
    </div>
  );
}
